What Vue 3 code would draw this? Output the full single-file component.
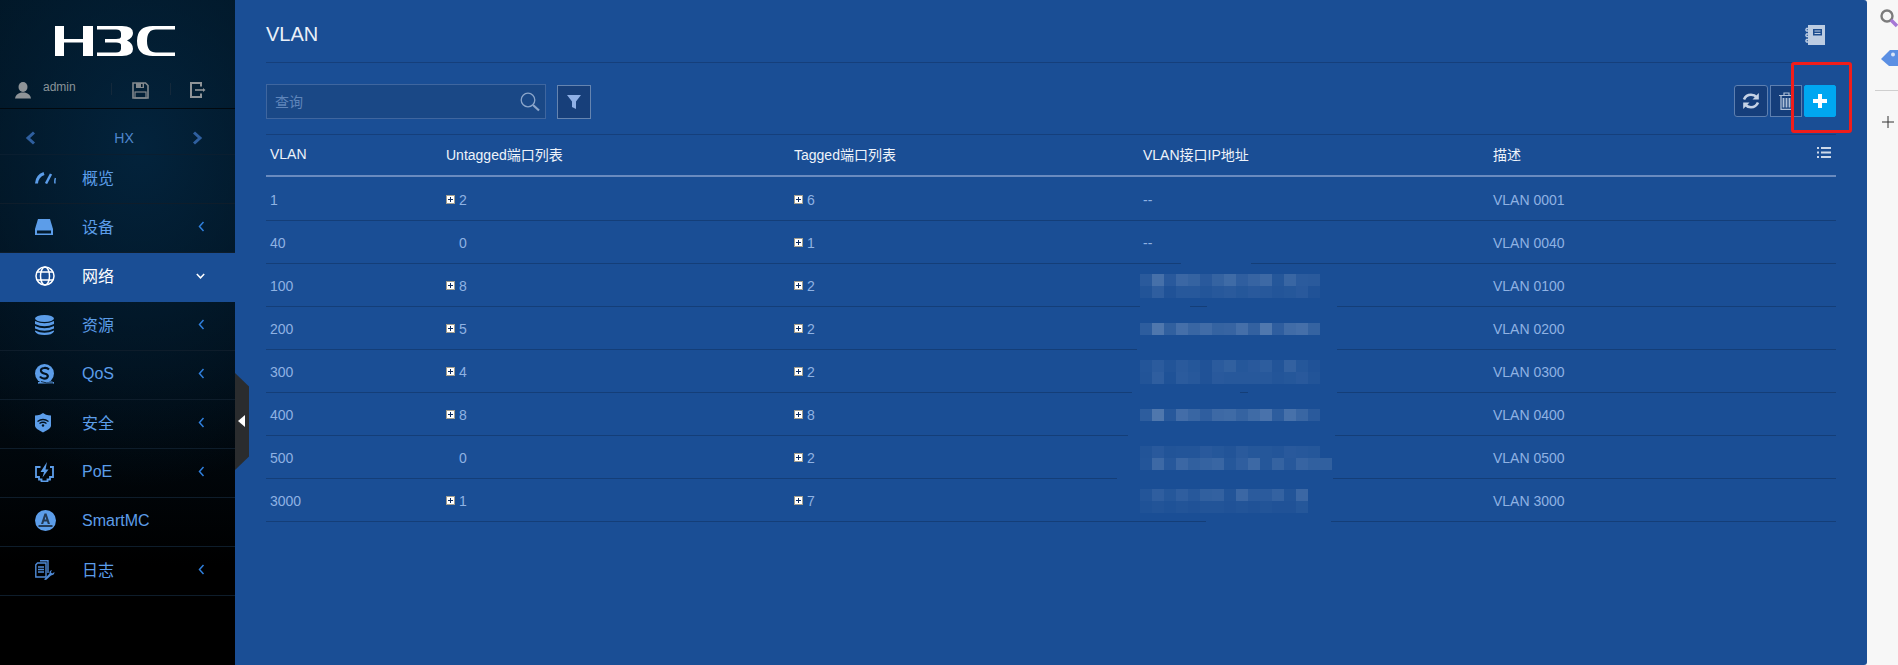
<script setup>
const menu = [
  { key: 'gauge', label: '概览', arrow: false, cjk: true },
  { key: 'disk', label: '设备', arrow: true, cjk: true },
  { key: 'globe', label: '网络', arrow: true, active: true, cjk: true },
  { key: 'db', label: '资源', arrow: true, cjk: true },
  { key: 'qos', label: 'QoS', arrow: true },
  { key: 'shield', label: '安全', arrow: true, cjk: true },
  { key: 'poe', label: 'PoE', arrow: true },
  { key: 'smart', label: 'SmartMC', arrow: false },
  { key: 'log', label: '日志', arrow: true, cjk: true }
]

const rows = [
  { id: '1', u: '2', uo: true, t: '6', ip: '--', d: 'VLAN 0001', gaps: [] },
  { id: '40', u: '0', uo: false, t: '1', ip: '--', d: 'VLAN 0040', gaps: [[1181, 1251]] },
  {
    id: '100', u: '8', uo: true, t: '2', d: 'VLAN 0100', gaps: [[1140, 1190], [1207, 1337]],
    mosaic: [
      [.10, .27, .09, .20, .17, .09, .17, .23, .13, .18, .21, .07, .19, .11, .10],
      [.05, .13, .04, .08, .08, .06, .08, .10, .07, .09, .08, .06, .07, .09, .04]
    ]
  },
  {
    id: '200', u: '5', uo: true, t: '2', d: 'VLAN 0200', gaps: [[1137, 1337]],
    mosaic: [[.12, .32, .14, .26, .19, .24, .17, .18, .26, .15, .33, .13, .24, .26, .17]]
  },
  {
    id: '300', u: '4', uo: true, t: '2', d: 'VLAN 0300', gaps: [[1132, 1240], [1248, 1337]],
    mosaic: [
      [.06, .11, .05, .10, .07, .04, .11, .14, .07, .09, .12, .05, .15, .07, .04],
      [.05, .13, .03, .11, .08, .04, .09, .08, .08, .08, .08, .06, .07, .09, .05]
    ]
  },
  {
    id: '400', u: '8', uo: true, t: '8', d: 'VLAN 0400', gaps: [[1128, 1335]],
    mosaic: [[.12, .32, .08, .25, .19, .13, .22, .23, .17, .23, .29, .12, .28, .19, .10]]
  },
  {
    id: '500', u: '0', uo: false, t: '2', d: 'VLAN 0500', gaps: [[1117, 1333]],
    mosaic: [
      [.05, .09, .05, .06, .06, .09, .07, .05, .10, .07, .07, .06, .09, .08, .07, 0],
      [.06, .22, .08, .20, .14, .17, .19, .07, .13, .22, .07, .17, .08, .18, .14, .14]
    ]
  },
  {
    id: '3000', u: '1', uo: true, t: '7', d: 'VLAN 3000', gaps: [[1206, 1331]],
    mosaic: [
      [.06, .13, .07, .13, .08, .14, .15, .05, .20, .11, .11, .16, .05, .20],
      [.03, .05, .03, .05, .04, .05, .05, .04, .05, .04, .05, .04, .04, .07]
    ]
  }
]

function gapStyle(g) {
  return { left: g[0] - 266 + 'px', width: g[1] - g[0] + 'px' }
}
function cellStyle(a) {
  return { backgroundColor: `rgba(255,255,255,${a * 0.72})` }
}
</script>

<template>
  <div class="page">
    <aside class="side">
      <div class="logo">
        <svg width="120" height="30" viewBox="0 0 120 30" role="img" aria-label="H3C logo">
          <g fill="#fff">
            <rect x="0" y="0" width="9" height="30" />
            <rect x="28" y="0" width="10" height="30" />
            <rect x="9" y="13" width="19" height="3.5" />
            <path d="M42 0H67Q78 0 78 7Q78 12 72 14.5Q78 17 78 23Q78 30 67 30H42V26.500H61Q66 26.500 66 22.500V19Q66 16.500 61 16.500H50V13H61Q66 13 66 10.500V7.500Q66 3.500 61 3.500H42Z" />
            <path d="M120 0V3.500H101Q92 3.500 92 15Q92 26.500 101 26.500H120V30H98Q82 30 82 15Q82 0 98 0Z" />
          </g>
        </svg>
      </div>
      <div class="user">
        <svg class="u-ic" width="16" height="17" viewBox="0 0 16 17" aria-hidden="true">
          <ellipse cx="8" cy="5" rx="4.500" ry="5" fill="#8f9498" />
          <path d="M0 16.500Q0.500 12 6 10.500H10Q15.500 12 16 16.500Z" fill="#8f9498" />
        </svg>
        <span class="u-name">admin</span>
        <i class="u-sep sep1"></i>
        <svg class="u-save" width="17" height="17" viewBox="0 0 17 17" aria-hidden="true">
          <path d="M1 1H13.500L16 3.500V16H1Z" fill="none" stroke="#83898e" stroke-width="1.600" />
          <rect x="4" y="1" width="8" height="5" fill="#83898e" />
          <rect x="9" y="2" width="1.600" height="3" fill="#041b2d" />
          <rect x="3" y="10" width="11" height="6" fill="none" stroke="#83898e" stroke-width="1.200" />
        </svg>
        <i class="u-sep sep2"></i>
        <svg class="u-out" width="16" height="16" viewBox="0 0 16 16" aria-hidden="true">
          <path d="M11 4.500V1H1V15H11V11.500" fill="none" stroke="#8f9498" stroke-width="2" />
          <path d="M5 8H14" stroke="#8f9498" stroke-width="1.600" />
          <path d="M13 6L15.500 8L13 10Z" fill="#8f9498" />
        </svg>
      </div>
      <div class="device">
        <svg width="11" height="14" viewBox="0 0 11 14" aria-hidden="true"><path d="M9 1.500L3 7L9 12.500" fill="none" stroke="#2f5f9f" stroke-width="3" /></svg>
        <span class="dev-name">HX</span>
        <svg width="11" height="14" viewBox="0 0 11 14" aria-hidden="true"><path d="M2 1.500L8 7L2 12.500" fill="none" stroke="#2f5f9f" stroke-width="3" /></svg>
      </div>
      <nav class="menu">
        <div v-for="m in menu" :key="m.key" class="item" :class="{ active: m.active }">
          <span class="m-ic">
            <svg v-if="m.key === 'gauge'" width="21" height="13" viewBox="0 0 21 13" aria-hidden="true">
              <path d="M1.500 12.500Q2 5 9 2.500" fill="none" stroke="#5c9de9" stroke-width="3" />
              <path d="M11 12.500L16 3" stroke="#5c9de9" stroke-width="2.500" />
              <path d="M20 12.500Q19.500 9.500 20.500 7" fill="none" stroke="#5c9de9" stroke-width="1.500" />
            </svg>
            <svg v-else-if="m.key === 'disk'" width="18" height="16" viewBox="0 0 18 16" aria-hidden="true">
              <path d="M3 0H15L18 10H0Z" fill="#5c9de9" />
              <path d="M0 10H18V16H0ZM2 11.500V14.500H16V11.500Z" fill="#5c9de9" fill-rule="evenodd" />
            </svg>
            <svg v-else-if="m.key === 'globe'" width="20" height="20" viewBox="0 0 20 20" aria-hidden="true">
              <g fill="none" stroke="#fff" stroke-width="1.500">
                <circle cx="10" cy="10" r="9" />
                <ellipse cx="10" cy="10" rx="4.500" ry="9" />
                <path d="M2 6H18M2 14H18" />
              </g>
            </svg>
            <svg v-else-if="m.key === 'db'" width="19" height="20" viewBox="0 0 19 20" aria-hidden="true">
              <g fill="#5c9de9">
                <ellipse cx="9.500" cy="3.500" rx="9.500" ry="3.500" />
                <path d="M0 6Q9.500 10.500 19 6V9Q9.500 13.500 0 9Z" />
                <path d="M0 11Q9.500 15.500 19 11V13.500Q9.500 18 0 13.500Z" />
                <path d="M0 15.500Q9.500 20 19 15.500V16.500Q17 20 9.500 20Q2 20 0 16.500Z" />
              </g>
            </svg>
            <svg v-else-if="m.key === 'qos'" width="20" height="20" viewBox="0 0 20 20" aria-hidden="true">
              <circle cx="9.500" cy="9.500" r="9.500" fill="#5c9de9" />
              <path d="M14 5.500Q12 3.500 9 4Q5.500 4.500 6 7Q6.500 9 10 9.800Q13 10.500 12.800 12.500Q12 15 8.500 14.500Q6 14 5 12.500" fill="none" stroke="#03111e" stroke-width="2.200" />
              <path d="M3 19H19L17 18H5Z" fill="#5c9de9" stroke="#5c9de9" />
              <path d="M6 17.500Q11 19.500 18 19" fill="none" stroke="#03111e" stroke-width=".8" />
            </svg>
            <svg v-else-if="m.key === 'shield'" width="16" height="20" viewBox="0 0 16 20" aria-hidden="true">
              <path d="M8 0L11 1.800Q13.500 2.500 16 2.500V13Q16 15.500 8 19.500Q0 15.500 0 13V2.500Q2.500 2.500 5 1.800Z" fill="#5c9de9" />
              <g fill="none" stroke="#03111e" stroke-width="1.300">
                <path d="M2.500 8.500Q8 4.500 13.500 8.500" />
                <path d="M4.500 10.500Q8 8 11.500 10.500" />
              </g>
              <circle cx="8" cy="12.500" r="1.200" fill="#03111e" />
            </svg>
            <svg v-else-if="m.key === 'poe'" width="19" height="20" viewBox="0 0 19 20" aria-hidden="true">
              <path d="M5.500 5H1V15H4V17.500H6.500V19.500H12.500V17.500H15V15H18V5H15" fill="none" stroke="#5c9de9" stroke-width="1.800" />
              <path d="M12 0L5.500 10H9L7.500 15.500L13.500 7.500H10.500Z" fill="#5c9de9" />
            </svg>
            <svg v-else-if="m.key === 'smart'" width="21" height="21" viewBox="0 0 21 21" aria-hidden="true">
              <circle cx="10.500" cy="10.500" r="10.500" fill="#5c9de9" />
              <path d="M9.500 3.500H11.500L15 14H12.800L12 11.500H9L8.200 14H6ZM9.700 9.500H11.300L10.500 6.500Z" fill="#243a55" fill-rule="evenodd" />
              <rect x="3.500" y="15" width="14" height="2" fill="#243a55" />
            </svg>
            <svg v-else width="20" height="20" viewBox="0 0 20 20" aria-hidden="true">
              <path d="M5 .8H13V13M2.500 3H11V17H.8V4.800Z" fill="none" stroke="#4f8ad6" stroke-width="1.400" />
              <path d="M3 7H9M3 9.500H9M3 12H9" stroke="#4f8ad6" stroke-width="1.300" />
              <path d="M9 19.500L14.500 13.500Q14 10.500 17 10L15.800 12.200L17.200 13.500L19.500 12Q19.500 15 16 15.500L11 20Z" fill="#4f8ad6" />
            </svg>
          </span>
          <span class="m-label" :class="{ cjk: m.cjk }">{{ m.label }}</span>
          <svg v-if="m.arrow && !m.active" class="m-arrow" width="7" height="11" viewBox="0 0 7 11" aria-hidden="true">
            <path d="M5.500 1L1.500 5.500L5.500 10" fill="none" stroke="#2f7fdc" stroke-width="1.500" />
          </svg>
          <svg v-else-if="m.arrow" class="m-arrow down" width="9" height="6" viewBox="0 0 9 6" aria-hidden="true">
            <path d="M.8 1L4.500 4.800L8.200 1" fill="none" stroke="#fff" stroke-width="1.500" />
          </svg>
        </div>
      </nav>
    </aside>

    <main class="main">
      <button class="collapse" type="button" aria-label="收起">
        <span class="tri"></span>
      </button>
      <header class="head">
        <h1 class="title">VLAN</h1>
        <svg class="book" width="20" height="20" viewBox="0 0 20 20" aria-hidden="true">
          <path d="M3 0H20V20H3Z" fill="#bccce2" />
          <rect x="8" y="4" width="9" height="6.500" fill="#1d4d8f" />
          <path d="M9.500 6H15.500M9.500 8.500H15.500" stroke="#bccce2" stroke-width="1" />
          <g fill="none" stroke="#bccce2" stroke-width="1.300">
            <path d="M5 3.500H1.500Q.3 5 1.500 6H5" />
            <path d="M5 9H1.500Q.3 10.500 1.500 11.500H5" />
            <path d="M5 14.500H1.500Q.3 16 1.500 17H5" />
          </g>
        </svg>
      </header>

      <div class="tools">
        <label class="search">
          <input class="s-input" type="text" placeholder="查询" />
          <svg width="20" height="20" viewBox="0 0 20 20" aria-hidden="true">
            <circle cx="8" cy="8" r="6.800" fill="none" stroke="#8ba6cb" stroke-width="1.300" />
            <path d="M13 13L19 18.500" stroke="#8ba6cb" stroke-width="2.200" />
          </svg>
        </label>
        <button class="filter" type="button" aria-label="筛选">
          <svg width="14" height="14" viewBox="0 0 14 14" aria-hidden="true">
            <path d="M0 0H14L9 6.500V14L5 12V6.500Z" fill="#8fb0e6" />
          </svg>
        </button>
        <div class="actions">
          <button class="act refresh" type="button" aria-label="刷新">
            <svg width="18" height="16" viewBox="0 0 18 16" aria-hidden="true">
              <g fill="none" stroke="#c5d2e5" stroke-width="2.600">
                <path d="M2 6.500Q4 1.800 9 1.800Q12.500 1.800 15 4.500" />
                <path d="M16 9.500Q14 14.200 9 14.200Q5.500 14.200 3 11.500" />
              </g>
              <path d="M16.800 0V6.500H10.500Z" fill="#c5d2e5" />
              <path d="M1.200 16V9.500H7.500Z" fill="#c5d2e5" />
            </svg>
          </button>
          <button class="act trash" type="button" aria-label="删除">
            <svg width="15" height="18" viewBox="0 0 15 18" aria-hidden="true">
              <path d="M0 3.500H15M5 3.500V1H10V3.500" fill="none" stroke="#aebfd8" stroke-width="1.200" />
              <path d="M2 4V17.500H13V4" fill="none" stroke="#aebfd8" stroke-width="1.300" />
              <path d="M4.500 6V15.500M7.500 6V15.500M10.500 6V15.500" stroke="#aebfd8" stroke-width="1.800" />
            </svg>
          </button>
          <button class="act add" type="button" aria-label="添加">
            <svg width="14" height="14" viewBox="0 0 14 14" aria-hidden="true">
              <path d="M5 0H9V5H14V9H9V14H5V9H0V5H5Z" fill="#fff" />
            </svg>
          </button>
        </div>
      </div>

      <div class="table">
        <div class="tr th">
          <span class="c0">VLAN</span>
          <span>Untagged端口列表</span>
          <span>Tagged端口列表</span>
          <span>VLAN接口IP地址</span>
          <span class="c-last">
            描述
            <svg class="cols" width="14" height="11" viewBox="0 0 14 11" aria-hidden="true">
              <path d="M0 0H2V2H0ZM0 4.500H2V6.500H0ZM0 9H2V11H0ZM4 0H14V2H4ZM4 4.500H14V6.500H4ZM4 9H14V11H4Z" fill="#cdd9ea" />
            </svg>
          </span>
        </div>
        <div v-for="r in rows" :key="r.id" class="tr td">
          <span class="c0">{{ r.id }}</span>
          <span class="port">
            <i class="tree" :class="{ hide: !r.uo }"></i>{{ r.u }}
          </span>
          <span class="port"><i class="tree"></i>{{ r.t }}</span>
          <span class="ip">
            <template v-if="r.ip">{{ r.ip }}</template>
            <span v-else class="mosaic">
              <span v-for="(line, i) in r.mosaic" :key="i" class="m-line">
                <i v-for="(a, j) in line" :key="j" class="m-cell" :style="cellStyle(a)"></i>
              </span>
            </span>
          </span>
          <span>{{ r.d }}</span>
          <i v-for="(g, k) in r.gaps" :key="k" class="gap" :style="gapStyle(g)"></i>
        </div>
      </div>

      <div class="mark"></div>
    </main>

    <aside class="rail">
      <svg class="r-search" width="18" height="21" viewBox="0 0 18 21" aria-hidden="true">
        <circle cx="7" cy="7" r="5.500" fill="none" stroke="#7c7c7c" stroke-width="2.400" />
        <path d="M11 11L17 17" stroke="#a678d6" stroke-width="3.500" />
      </svg>
      <svg class="r-tag" width="17" height="17" viewBox="0 0 17 17" aria-hidden="true">
        <path d="M0 9L9 0H17V16H8Z" fill="#5b8fe3" />
        <circle cx="12" cy="4.500" r="2" fill="#d8e4f8" />
      </svg>
      <div class="r-line"></div>
      <svg class="r-plus" width="12" height="12" viewBox="0 0 12 12" aria-hidden="true">
        <path d="M6 0V12M0 6H12" stroke="#333" stroke-width="1" />
      </svg>
    </aside>
  </div>
</template>

<style scoped>
.page {
  display: flex;
  width: 1898px;
  height: 665px;
  overflow: hidden;
  font-family: "Liberation Sans", "Noto Sans CJK SC", sans-serif;
  background: #f7f7f7;
}
.side {
  width: 235px;
  flex: none;
  background:
    radial-gradient(ellipse 260px 340px at 60% 22%, #03233c 0%, rgba(3, 35, 60, 0) 100%),
    linear-gradient(180deg, #011320 0%, #010c15 55%, #000 85%);
}
.logo {
  height: 70px;
  padding: 26px 0 0 55px;
  box-sizing: border-box;
}
.user {
  height: 39px;
  position: relative;
  border-bottom: 1px solid #02090f;
  box-sizing: border-box;
  display: flex;
  align-items: flex-start;
}
.u-ic { margin: 12px 0 0 15px; }
.u-name { margin: 9px 0 0 12px; font-size: 12px; line-height: 16px; color: #8a9499; }
.u-sep { width: 1px; height: 12px; margin-top: 13px; background: #14293b; }
.sep1 { margin-left: 35px; }
.u-save { margin: 12px 0 0 20px; }
.sep2 { margin-left: 21px; }
.u-out { margin: 12px 0 0 19px; }
.device {
  height: 46px;
  box-sizing: border-box;
  border-bottom: 1px solid #0a1e30;
  display: flex;
  align-items: center;
  padding: 12px 0 0 25px;
}
.dev-name {
  width: 156px;
  box-sizing: border-box;
  padding-left: 26px;
  text-align: center;
  font-size: 14px;
  color: #4f87cf;
  margin: 0 3px 0 -3px;
}
.menu { display: flex; flex-direction: column; }
.item {
  height: 49px;
  box-sizing: border-box;
  padding-bottom: 3px;
  border-bottom: 1px solid #0e1d2b;
  display: flex;
  align-items: center;
  position: relative;
  color: #5c9de9;
  font-size: 16px;
}
.item.active { background: #1a4e95; color: #fff; border-bottom-color: #1a4e95; }
.m-ic { width: 82px; padding-left: 35px; box-sizing: border-box; display: flex; align-items: center; }
.m-label { flex: 1; }
.m-label.cjk { margin-bottom: 2px; }
.m-arrow { margin-right: 30px; }

.main {
  width: 1632px;
  flex: none;
  background: #1a4e95;
  border-top-right-radius: 3px;
  border-bottom-right-radius: 3px;
  position: relative;
  padding: 0 31px;
  box-sizing: border-box;
}
.collapse {
  position: absolute;
  left: 0;
  top: 373px;
  width: 14px;
  height: 97px;
  padding: 0;
  border: 0;
  background: #2a2c2e;
  clip-path: polygon(0 0, 100% 14%, 100% 86%, 0 100%);
}
.tri {
  position: absolute;
  left: 3px;
  top: 42px;
  width: 0;
  height: 0;
  border-top: 6px solid transparent;
  border-bottom: 6px solid transparent;
  border-right: 7px solid #fff;
}
.head {
  height: 63px;
  box-sizing: border-box;
  padding-top: 7px;
  border-bottom: 1px solid #153f7b;
  display: flex;
  align-items: center;
  justify-content: space-between;
}
.title { margin: 0; font-size: 20px; font-weight: 400; color: #eaf0f8; }
.book { margin: 0 11px 0 0; }
.tools {
  height: 72px;
  box-sizing: border-box;
  border-bottom: 1px solid #153f7b;
  display: flex;
  align-items: flex-start;
  padding-top: 21px;
}
.search {
  width: 280px;
  height: 35px;
  box-sizing: border-box;
  border: 1px solid #3f669f;
  background: #1a4886;
  display: flex;
  align-items: center;
  padding: 0 5px 0 8px;
}
.s-input {
  flex: 1;
  min-width: 0;
  border: 0;
  outline: 0;
  padding: 0;
  background: transparent;
  font: 14px "Liberation Sans", "Noto Sans CJK SC", sans-serif;
  color: #fff;
}
.s-input::placeholder { color: #5f85ba; opacity: 1; }
.filter {
  width: 34px;
  height: 34px;
  margin: 1px 0 0 11px;
  padding: 0;
  border: 1px solid #6584b0;
  background: #173f7a;
  display: flex;
  align-items: center;
  justify-content: center;
}
.actions { margin-left: auto; display: flex; gap: 2px; padding-top: 1px; }
.act {
  width: 32px;
  height: 32px;
  padding: 0;
  box-sizing: border-box;
  border: 1px solid #5d7fb0;
  background: #153e7b;
  display: flex;
  align-items: center;
  justify-content: center;
}
.refresh { width: 34px; border-radius: 3px; }
.add { background: #00a7f1; border-color: #00a7f1; border-radius: 2px; }
.tr {
  display: grid;
  grid-template-columns: 180px 348px 349px 349px 1fr;
  position: relative;
  align-items: center;
  font-size: 14px;
}
.th {
  height: 42px;
  box-sizing: border-box;
  padding-bottom: 2px;
  border-bottom: 2px solid #6a8bbf;
  color: #eef3fa;
}
.td {
  height: 43px;
  box-sizing: border-box;
  padding-top: 1px;
  border-bottom: 1px solid #143e78;
  color: #8fb2e3;
}
.td:nth-child(2) { height: 44px; padding-top: 2px; }
.td > :last-of-type { padding-left: 1px; }
.c0 { padding-left: 4px; }
.c-last { display: flex; justify-content: space-between; align-items: center; padding: 0 5px 0 1px; }
.cols { margin-top: -3px; }
.port { display: flex; align-items: center; }
.tree {
  width: 9px;
  height: 9px;
  margin-right: 4px;
  box-sizing: border-box;
  border: 1px solid #a49f8f;
  background: linear-gradient(#0c2c60, #0c2c60) center / 5px 1px no-repeat,
    linear-gradient(#0c2c60, #0c2c60) center / 1px 5px no-repeat,
    #fff;
}
.tree.hide { visibility: hidden; }
.mosaic { display: flex; flex-direction: column; margin-left: -3px; }
.m-line { display: flex; }
.m-cell { width: 12px; height: 12px; display: block; }
.gap { position: absolute; bottom: -1px; height: 1px; padding: 0 !important; background: #1a4e95; }
.mark {
  position: absolute;
  left: 1556px;
  top: 62px;
  width: 61px;
  height: 71px;
  box-sizing: border-box;
  border: 3px solid #f01d1a;
  border-radius: 3px;
}
.rail {
  flex: 1;
  position: relative;
  background: #f7f7f7;
  display: flex;
  flex-direction: column;
  align-items: flex-start;
  overflow: hidden;
}
.r-search { margin: 9px 0 0 13px; }
.r-tag { margin: 20px 0 0 14px; }
.r-line { width: 23px; height: 1px; margin: 23px 0 0 8px; background: #cfcfcf; }
.r-plus { margin: 25px 0 0 15px; }
</style>
